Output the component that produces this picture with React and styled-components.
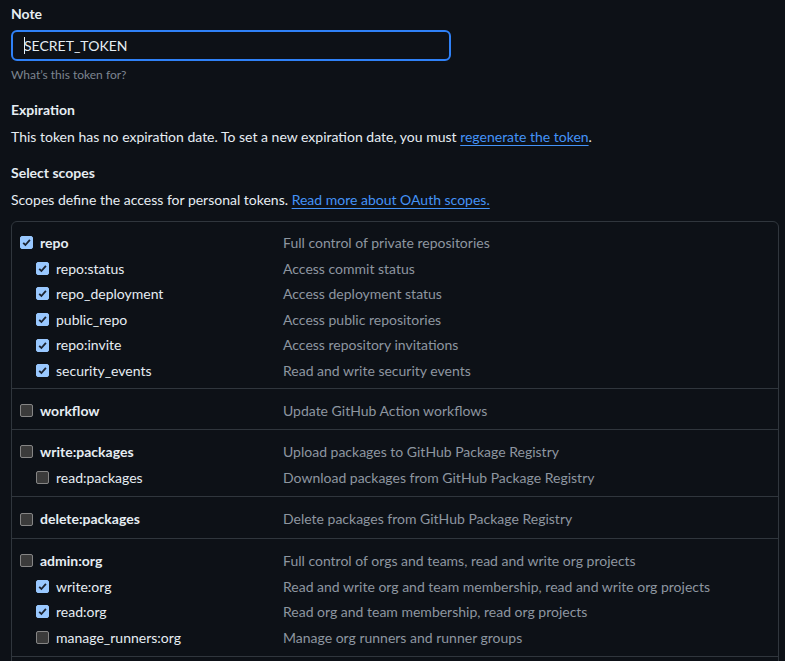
import React from 'react';
import styled, { createGlobalStyle } from 'styled-components';

const FONT = `Lato, "Noto Sans", "Liberation Sans", sans-serif`;

const GlobalStyle = createGlobalStyle`
  html, body {
    margin: 0;
    padding: 0;
    background: #0d1117;
  }
  body {
    font-family: ${FONT};
    font-size: 14px;
    color: #e6edf3;
    overflow: hidden;
  }
`;

const scopeGroups = [
  {
    name: 'repo',
    desc: 'Full control of private repositories',
    checked: true,
    children: [
      { name: 'repo:status', desc: 'Access commit status', checked: true },
      { name: 'repo_deployment', desc: 'Access deployment status', checked: true },
      { name: 'public_repo', desc: 'Access public repositories', checked: true },
      { name: 'repo:invite', desc: 'Access repository invitations', checked: true },
      { name: 'security_events', desc: 'Read and write security events', checked: true },
    ],
  },
  { name: 'workflow', desc: 'Update GitHub Action workflows', children: [] },
  {
    name: 'write:packages',
    desc: 'Upload packages to GitHub Package Registry',
    children: [{ name: 'read:packages', desc: 'Download packages from GitHub Package Registry' }],
  },
  { name: 'delete:packages', desc: 'Delete packages from GitHub Package Registry', children: [] },
  {
    name: 'admin:org',
    desc: 'Full control of orgs and teams, read and write org projects',
    children: [
      { name: 'write:org', desc: 'Read and write org and team membership, read and write org projects', checked: true },
      { name: 'read:org', desc: 'Read org and team membership, read org projects', checked: true },
      { name: 'manage_runners:org', desc: 'Manage org runners and runner groups' },
    ],
  },
  {
    name: 'admin:public_key',
    desc: 'Full control of user public keys',
    children: [],
  },
];

const Checkbox = ({ checked }) => (
  <Box $checked={checked}>
    {checked && (
      <svg width="11" height="11" viewBox="0 0 11 11">
        <path d="M2.2 5.8 L4.4 8 L8.9 2.8" fill="none" stroke="#1b2330" strokeWidth="1.8" />
      </svg>
    )}
  </Box>
);

const ScopeRow = ({ name, desc, checked, sub }) => (
  <Row>
    <NameCell $sub={sub}>
      <Checkbox checked={checked} />
      <ScopeName $sub={sub}>{name}</ScopeName>
    </NameCell>
    <Desc>{desc}</Desc>
  </Row>
);

const App = () => (
  <Page>
    <GlobalStyle />
    <Label>Note</Label>
    <Input>
      <Caret />
      SECRET_TOKEN
    </Input>
    <Hint>What’s this token for?</Hint>

    <Label $gap>Expiration</Label>
    <Text>
      This token has no expiration date. To set a new expiration date, you must{' '}
      <A href="#">regenerate the token</A>.
    </Text>

    <Label $gap>Select scopes</Label>
    <Text>
      Scopes define the access for personal tokens. <A href="#">Read more about OAuth scopes.</A>
    </Text>

    <ScopesTable>
      {scopeGroups.map((group) => (
        <Group key={group.name}>
          <ScopeRow name={group.name} desc={group.desc} checked={group.checked} />
          {group.children.map((child) => (
            <ScopeRow key={child.name} {...child} sub />
          ))}
        </Group>
      ))}
    </ScopesTable>
  </Page>
);

const Page = styled.div`
  padding: 4px 6px 0 11px;
`;

const Label = styled.div`
  font-weight: 700;
  line-height: 20px;
  margin-top: ${(p) => (p.$gap ? '16px' : '0')};
`;

const Input = styled.div`
  box-sizing: border-box;
  width: 440px;
  height: 31px;
  margin-top: 6px;
  padding: 0 11px;
  display: flex;
  align-items: center;
  border: 2px solid #2f81f7;
  border-radius: 6px;
  background: #0d1117;
  line-height: 20px;
`;

const Caret = styled.span`
  width: 1px;
  height: 17px;
  background: #e6edf3;
  margin-right: -1px;
`;

const Hint = styled.div`
  margin-top: 5px;
  font-size: 12px;
  line-height: 18px;
  color: #7d8590;
`;

const Text = styled.div`
  margin-top: 7px;
  line-height: 20px;
`;

const A = styled.a`
  color: #4493f8;
  text-decoration: underline;
  text-underline-offset: 3px;
`;

const ScopesTable = styled.div`
  margin-top: 11px;
  border: 1px solid #30363d;
  border-radius: 6px;
`;

const Group = styled.div`
  padding: 8px 8px 4px;
  & + & {
    border-top: 1px solid #30363d;
    padding: 9px 8px 6px;
  }
`;

const Row = styled.div`
  display: grid;
  grid-template-columns: 263px 1fr;
  line-height: 25.6px;
`;

const NameCell = styled.div`
  display: flex;
  align-items: center;
  padding-left: ${(p) => (p.$sub ? '16px' : '0')};
`;

const Box = styled.span`
  box-sizing: border-box;
  width: 13px;
  height: 13px;
  flex: none;
  display: flex;
  align-items: center;
  justify-content: center;
  border-radius: 2px;
  background: ${(p) => (p.$checked ? '#99c8ff' : '#3b3b3b')};
  border: 1px solid ${(p) => (p.$checked ? '#99c8ff' : '#858585')};
`;

const ScopeName = styled.span`
  margin-left: 7px;
  font-weight: ${(p) => (p.$sub ? 400 : 700)};
  color: #e6edf3;
`;

const Desc = styled.span`
  color: #8d96a0;
`;

export default App;
